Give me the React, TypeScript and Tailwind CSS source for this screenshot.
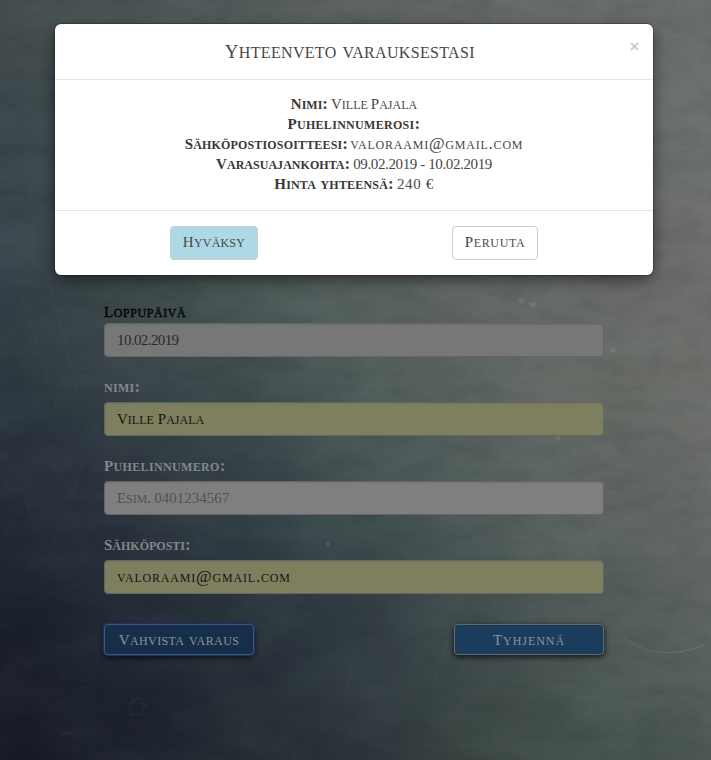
import React from "react";

// Base tones of the brushed backdrop, top to bottom, left to right.
const tones = [
  ["#41494b", "#485051", "#535a5a", "#5b6060", "#636767", "#686b6b", "#6b6d6d"],
  ["#3a454a", "#424d4e", "#4e5755", "#575f5c", "#606463", "#676b6b", "#6c6e6f"],
  ["#37434b", "#3e4a4a", "#4a5653", "#586260", "#626664", "#686a68", "#6d6d6c"],
  ["#2c363e", "#354045", "#3e4b4c", "#4e5a58", "#5c6461", "#656863", "#6d6e6b"],
  ["#212935", "#29313c", "#313e44", "#3d4c4d", "#4e5a58", "#5c6360", "#666865"],
  ["#1a1e2b", "#1f2532", "#262f38", "#303a41", "#404c4c", "#4e5956", "#5b625f"],
  ["#171926", "#1b202b", "#212830", "#2b343a", "#3a4541", "#45514f", "#4b5753"],
];

function Backdrop() {
  return (
    <svg className="absolute inset-0 h-full w-full" viewBox="0 0 711 760" preserveAspectRatio="none" aria-hidden="true">
      <defs>
        <filter id="soft" x="-20%" y="-20%" width="140%" height="140%" colorInterpolationFilters="sRGB">
          <feGaussianBlur stdDeviation="38" />
        </filter>
        <filter id="grain" x="0" y="0" width="100%" height="100%" colorInterpolationFilters="sRGB">
          <feTurbulence type="fractalNoise" baseFrequency="0.01 0.018" numOctaves="6" seed="8" />
          <feColorMatrix values="0 0 0 0 0.7  0 0 0 0 0.8  0 0 0 0 0.77  1.6 0 0 0 -0.55" />
        </filter>
        <filter id="shade" x="0" y="0" width="100%" height="100%" colorInterpolationFilters="sRGB">
          <feTurbulence type="fractalNoise" baseFrequency="0.03 0.07" numOctaves="5" seed="21" />
          <feColorMatrix values="0 0 0 0 0.05  0 0 0 0 0.12  0 0 0 0 0.14  0 1.8 0 0 -0.75" />
        </filter>
      </defs>
      <g filter="url(#soft)">
        {tones.map((row, r) =>
          row.map((c, i) => (
            <rect
              key={`${r}-${i}`}
              x={i === 0 ? -260 : i * 118.5 - 60}
              y={r === 0 ? -260 : r * 126.7 - 64}
              width={i === 0 || i === 6 ? 320 : 120}
              height={r === 0 || r === 6 ? 324 : 128}
              fill={c}
            />
          )),
        )}
      </g>
      <rect width="711" height="760" filter="url(#grain)" opacity=".08" />
      <rect width="711" height="760" filter="url(#shade)" opacity=".1" />
      <g stroke="#9fb0b0" strokeOpacity=".06" fill="none" strokeWidth="1">
        <path d="M0 612L94 578M18 282L60 420M50 285L80 400M97 425L50 555M22 490L45 550M48 455L104 545M150 480L200 540M60 365L104 373M200 500L260 450M432 690L448 640M346 690L358 640" />
        <path d="M622 636Q655 664 705 645" strokeOpacity=".2" />
        <path d="M132 700l8-2 5 7-4 9-10 1-2-8zM60 735l10-3 5 6M515 757l8-4 12 5M76 688h10M640 722l12 4" strokeOpacity=".1" />
      </g>
      <g fill="#aab8b4" fillOpacity=".14">
        <circle cx="521" cy="301" r="3" />
        <circle cx="533" cy="305" r="3" />
        <circle cx="613" cy="350" r="3" />
        <circle cx="558" cy="438" r="2.5" />
        <circle cx="328" cy="544" r="2.5" />
      </g>
    </svg>
  );
}

// Inscriptional lettering: tall small caps with a restrained initial.
const caps = "inline-block text-[17px] first-letter:text-[15px]";
const digits = "text-[15px]";

const field =
  "flex h-[34px] items-center rounded border border-[#666668] px-3 shadow-[inset_0_1px_1px_rgba(0,0,0,0.08)]";
const label = "mt-5 mb-[5px] flex h-5 items-center leading-5 font-bold text-[#858788]";
const action = "flex h-[31px] w-[150px] items-center justify-center rounded border text-[#8d9297]";
const choice = "flex h-[34px] items-center justify-center rounded border border-[#ccc] pb-0.5 text-[#484848]";

function BookingForm() {
  return (
    <form className="relative ml-[104px] w-[500px] pt-[303px]">
      <div className="flex h-5 items-center pb-0.5 leading-5 text-black">
        <span className={`${caps} tracking-[0.57px] [-webkit-text-stroke:0.3px_black]`}>Loppupäivä</span>
      </div>
      <div className={`${field} bg-[#777777] text-[#2a2a2a]`}>
        <span className={`${digits} tracking-[-0.6px]`}>10.02.2019</span>
      </div>
      <div className={label}><span className="text-[17px] tracking-[0.3px]">nimi:</span></div>
      <div className={`${field} gap-1 bg-[#7d7f5f] text-[#151510]`}>
        <span className={caps}>Ville</span> <span className={caps}>Pajala</span>
      </div>
      <div className={label}><span className={`${caps} tracking-[0.35px]`}>Puhelinnumero:</span></div>
      <div className={`${field} gap-[3px] bg-[#7f7f7f] text-[#525252]`}>
        <span className={`${caps} tracking-[-0.1px]`}>Esim.</span> <span className={digits}>0401234567</span>
      </div>
      <div className={label}><span className={caps}>Sähköposti:</span></div>
      <div className={`${field} bg-[#7d7f5f] text-[#151510]`}>
        <span className="text-[17px] tracking-[0.81px]">valoraami@gmail.com</span>
      </div>
      <div className="mt-[30px] flex justify-between">
        <button type="button" className={`${action} border-[#3d5585] bg-[#152f49] shadow-[0_0_0_1px_#1d3460,0_3px_6px_rgba(0,0,0,0.7)]`}>
          <span className={`${caps} tracking-[0.4px]`}>Vahvista varaus</span>
        </button>
        <button type="button" className={`${action} border-[#666a6c] bg-[#1b3d5d] shadow-[0_2px_6px_rgba(0,0,0,0.8)]`}>
          <span className={`${caps} tracking-[0.95px]`}>Tyhjennä</span>
        </button>
      </div>
    </form>
  );
}

function Summary() {
  return (
    <div className="absolute top-6 left-[55px] flex h-[251px] w-[598px] flex-col rounded-md bg-white text-[#484848] shadow-[0_5px_15px_rgba(0,0,0,0.5),0_0_0_1px_rgba(0,0,0,0.2)]">
      <div className="flex h-14 border-b border-[#e5e5e5] px-[15px]">
        <h4 className="flex-1 pt-[15px] text-center leading-6">
          <span className="inline-block text-[22.3px] tracking-[0.32px] first-letter:text-[19px]">Yhteenveto varauksestasi</span>
        </h4>
        <button type="button" className="-mr-px h-5 pt-[13px] font-['Liberation_Sans',sans-serif] text-[16px] leading-5 font-bold text-[#ccc]">×</button>
      </div>
      <div className="flex h-[130px] flex-col pt-[14px] text-[#383838]">
        <p className="flex h-5 items-baseline justify-center gap-[3px] leading-5">
          <b className={caps}>Nimi:</b> <span className={`${caps} text-[#484848]`}>Ville</span>{" "}
          <span className={`${caps} text-[#484848]`}>Pajala</span>
        </p>
        <p className="flex h-5 items-baseline justify-center leading-5">
          <b className={`${caps} tracking-[0.3px]`}>Puhelinnumerosi:</b>
        </p>
        <p className="flex h-5 items-baseline justify-center gap-[2px] leading-5">
          <b className={`${caps} tracking-[0.16px]`}>Sähköpostiosoitteesi:</b>{" "}
          <span className="text-[17px] tracking-[0.78px] text-[#484848]">valoraami@gmail.com</span>
        </p>
        <p className="flex h-5 items-baseline justify-center gap-[3px] leading-5">
          <b className={`${caps} tracking-[0.03px]`}>Varasuajankohta:</b>{" "}
          <span className={`${digits} tracking-[-0.38px] text-[#484848]`}>09.02.2019 - 10.02.2019</span>
        </p>
        <p className="flex h-5 items-baseline justify-center gap-[3px] leading-5">
          <b className={`${caps} tracking-[0.2px]`}>Hinta yhteensä:</b>{" "}
          <span className={`${digits} tracking-[0.6px] text-[#484848]`}>240 €</span>
        </p>
      </div>
      <div className="flex flex-1 border-t border-[#e5e5e5] pt-[15px] pl-[115px]">
        <button type="button" className={`${choice} w-[88px] bg-[#add8e6]`}>
          <span className={`${caps} tracking-[0.2px]`}>Hyväksy</span>
        </button>
        <button type="button" className={`${choice} ml-[194px] w-[86px] bg-white`}>
          <span className={`${caps} tracking-[0.65px]`}>Peruuta</span>
        </button>
      </div>
    </div>
  );
}

export default function App() {
  return (
    <main className="relative h-[760px] w-[711px] overflow-hidden bg-[#303a40] font-['Liberation_Serif',serif] text-[16px] [font-variant-caps:small-caps]">
      <Backdrop />
      <BookingForm />
      <Summary />
    </main>
  );
}
